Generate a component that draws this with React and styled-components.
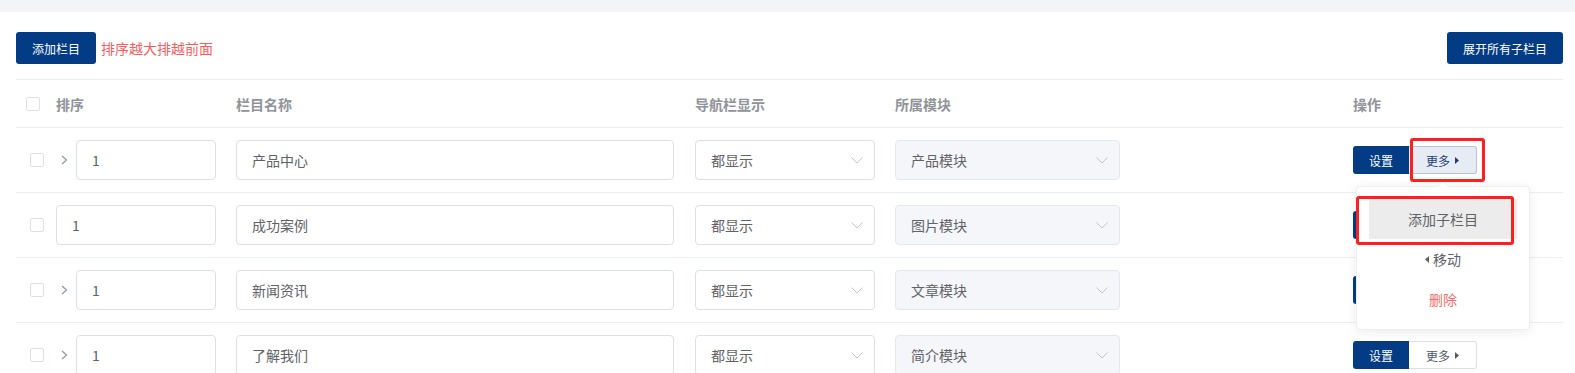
import React from 'react';
import styled, { createGlobalStyle } from 'styled-components';

const GlobalStyle = createGlobalStyle`
  html, body { margin: 0; padding: 0; overflow: hidden; background: #f3f4f8; }
  body { font-family: "Noto Sans CJK SC", "Noto Sans", sans-serif; }
  * { box-sizing: border-box; }
`;

const Page = styled.div`
  padding-top: 12px;
`;

const Card = styled.div`
  background: #fff;
  padding: 20px 12px 0 16px;
  min-height: 420px;
`;

const Toolbar = styled.div`
  display: flex;
  align-items: center;
  justify-content: space-between;
  height: 32px;
  margin-bottom: 15px;
`;

const ToolGroup = styled.div`
  display: flex;
  align-items: center;
  gap: 5px;
`;

const PrimaryButton = styled.button`
  height: 32px;
  padding: 0 16px;
  background: #033b84;
  color: #fff;
  border: none;
  border-radius: 3px;
  font-size: 12px;
  font-family: inherit;
  cursor: pointer;
`;

const Note = styled.span`
  color: #fa5c5c;
  font-size: 14px;
`;

const gridCols = `40px 180px 459px 200px 458px 1fr`;

const HeaderRow = styled.div`
  display: grid;
  grid-template-columns: ${gridCols};
  align-items: center;
  height: 49px;
  border-top: 1px solid #ebeef5;
  border-bottom: 1px solid #ebeef5;
`;

const HeadCell = styled.div`
  font-size: 14px;
  font-weight: 700;
  color: #909399;
`;

const Row = styled.div`
  display: grid;
  grid-template-columns: ${gridCols};
  align-items: center;
  height: 65px;
  border-bottom: 1px solid #ebeef5;
`;

const Checkbox = styled.span`
  display: block;
  width: 14px;
  height: 14px;
  margin-left: ${p => p.$offset}px;
  border: 1px solid #dcdfe6;
  border-radius: 2px;
  background: #fff;
`;

const SortCell = styled.div`
  display: flex;
  align-items: center;
  width: 160px;
`;

const Expander = styled.span`
  display: flex;
  align-items: center;
  width: 20px;
  height: 40px;
  padding-left: 5px;
`;

const TextInput = styled.div`
  flex: ${p => (p.$grow ? 1 : 'none')};
  width: ${p => (p.$w ? `${p.$w}px` : 'auto')};
  height: 40px;
  display: flex;
  align-items: center;
  padding: 0 15px;
  border: 1px solid #dcdfe6;
  border-radius: 4px;
  font-size: 14px;
  color: #606266;
  background: #fff;
`;

const Select = styled.div`
  width: ${p => p.$w}px;
  height: 40px;
  display: flex;
  align-items: center;
  justify-content: space-between;
  padding: 0 11px 0 15px;
  border: 1px solid ${p => (p.$disabled ? '#e4e7ed' : '#dcdfe6')};
  border-radius: 4px;
  background: ${p => (p.$disabled ? '#f5f6fa' : '#fff')};
  font-size: 14px;
  color: #606266;
`;

const ButtonGroup = styled.div`
  display: flex;
  align-items: center;
`;

const SetButton = styled.button`
  width: 56px;
  height: 28px;
  border: none;
  border-radius: 3px 0 0 3px;
  background: #033b84;
  color: #fff;
  font-size: 12px;
  font-family: inherit;
  padding: 0;
`;

const MoreWrap = styled.div`
  position: relative;
`;

const MoreButton = styled.button`
  width: 68px;
  height: 28px;
  display: flex;
  align-items: center;
  justify-content: center;
  gap: 5px;
  padding: 0;
  border: 1px solid ${p => (p.$active ? '#b6c3d6' : '#dcdfe6')};
  border-left: none;
  border-radius: 0 3px 3px 0;
  background: ${p => (p.$active ? '#e6ebf4' : '#fff')};
  color: ${p => (p.$active ? '#1e3d78' : '#505a6e')};
  font-size: 12px;
  font-family: inherit;
`;

const Highlight = styled.div`
  position: absolute;
  left: ${p => p.$l}px;
  top: ${p => p.$t}px;
  width: ${p => p.$w}px;
  height: ${p => p.$h}px;
  border: 3px solid #ff1f1f;
  border-radius: 3px;
  pointer-events: none;
  z-index: 30;
`;

const Dropdown = styled.div`
  position: absolute;
  top: calc(100% + 12px);
  left: 50%;
  transform: translateX(-50%);
  width: 174px;
  padding: 12px 12px 10px;
  background: #fff;
  border: 1px solid #ebeef5;
  border-radius: 4px;
  box-shadow: 0 2px 12px rgba(0, 0, 0, 0.08);
  z-index: 20;

  &::before {
    content: '';
    position: absolute;
    top: -6px;
    left: 50%;
    margin-left: -6px;
    border-left: 6px solid transparent;
    border-right: 6px solid transparent;
    border-bottom: 6px solid #ebeef5;
  }
  &::after {
    content: '';
    position: absolute;
    top: -5px;
    left: 50%;
    margin-left: -5px;
    border-left: 5px solid transparent;
    border-right: 5px solid transparent;
    border-bottom: 5px solid #fff;
  }
`;

const MenuItem = styled.div`
  height: 40px;
  display: flex;
  align-items: center;
  justify-content: center;
  gap: 4px;
  font-size: 14px;
  color: ${p => (p.$danger ? '#f56c6c' : '#606266')};
  background: ${p => (p.$active ? '#ececec' : 'transparent')};
`;

const ChevronRight = () => (
  <svg width="7" height="10" viewBox="0 0 7 10">
    <path d="M1 1 L5.5 5 L1 9" fill="none" stroke="#8a97ad" strokeWidth="1.2" />
  </svg>
);

const ChevronDown = () => (
  <svg width="12" height="7" viewBox="0 0 12 7">
    <path d="M0.5 0.5 L6 6 L11.5 0.5" fill="none" stroke="#c0c4cc" strokeWidth="1" />
  </svg>
);

const TriRight = ({ color }) => (
  <svg width="4" height="7" viewBox="0 0 4 7">
    <path d="M0 0 L4 3.5 L0 7 Z" fill={color} />
  </svg>
);

const TriLeft = () => (
  <svg width="4" height="7" viewBox="0 0 4 7">
    <path d="M4 0 L0 3.5 L4 7 Z" fill="#606266" />
  </svg>
);

const rows = [
  { name: '产品中心', module: '产品模块', expandable: true, open: true },
  { name: '成功案例', module: '图片模块', expandable: false },
  { name: '新闻资讯', module: '文章模块', expandable: true },
  { name: '了解我们', module: '简介模块', expandable: true },
];

export default function App() {
  return (
    <Page>
      <GlobalStyle />
      <Card>
        <Toolbar>
          <ToolGroup>
            <PrimaryButton>添加栏目</PrimaryButton>
            <Note>排序越大排越前面</Note>
          </ToolGroup>
          <PrimaryButton>展开所有子栏目</PrimaryButton>
        </Toolbar>

        <HeaderRow>
          <Checkbox $offset={10} />
          <HeadCell>排序</HeadCell>
          <HeadCell>栏目名称</HeadCell>
          <HeadCell>导航栏显示</HeadCell>
          <HeadCell>所属模块</HeadCell>
          <HeadCell>操作</HeadCell>
        </HeaderRow>

        {rows.map((r, i) => (
          <Row key={i}>
            <Checkbox $offset={14} />
            <SortCell>
              {r.expandable && (
                <Expander>
                  <ChevronRight />
                </Expander>
              )}
              <TextInput $grow>1</TextInput>
            </SortCell>
            <TextInput $w={438}>{r.name}</TextInput>
            <Select $w={180}>
              <span>都显示</span>
              <ChevronDown />
            </Select>
            <Select $w={225} $disabled>
              <span>{r.module}</span>
              <ChevronDown />
            </Select>
            <ButtonGroup>
              <SetButton>设置</SetButton>
              <MoreWrap>
                <MoreButton $active={r.open}>
                  <span>更多</span>
                  <TriRight color={r.open ? '#1e3d78' : '#505a6e'} />
                </MoreButton>
                {r.open && (
                  <>
                    <Highlight $l={1} $t={-8} $w={75} $h={44} />
                    <Dropdown>
                      <Highlight $l={-1} $t={9} $w={158} $h={49} />
                      <MenuItem $active>添加子栏目</MenuItem>
                      <MenuItem>
                        <TriLeft />
                        <span>移动</span>
                      </MenuItem>
                      <MenuItem $danger>删除</MenuItem>
                    </Dropdown>
                  </>
                )}
              </MoreWrap>
            </ButtonGroup>
          </Row>
        ))}
      </Card>
    </Page>
  );
}
